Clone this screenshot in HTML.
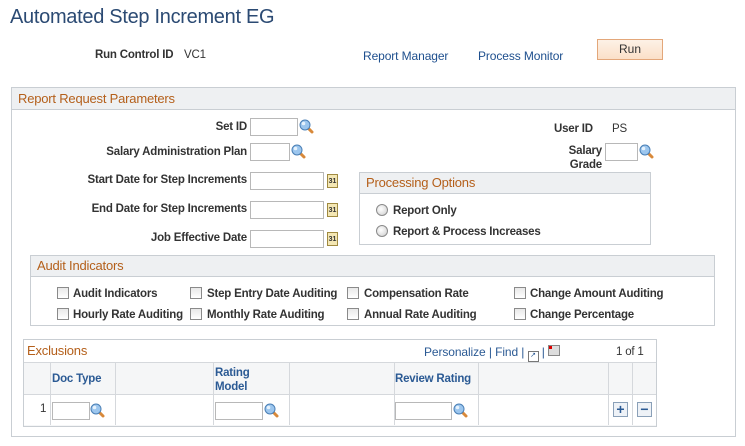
<!DOCTYPE html>
<html><head><style>
*{box-sizing:border-box}
body{margin:0;width:745px;height:446px;background:#fff;font-family:"Liberation Sans",Arial,sans-serif;position:relative;overflow:hidden}
.a{position:absolute;white-space:nowrap}
.lb{font-weight:bold;font-size:11.5px;color:#333;letter-spacing:-0.2px;margin-top:2px}
.tx{font-size:11.5px;color:#333;letter-spacing:-0.2px;margin-top:2px}
.lk{font-size:12px;color:#1e4f8e;letter-spacing:-0.1px}
.in{position:absolute;border:1px solid #b8b8b8;background:#fff;height:18px}
.box{position:absolute;border:1px solid #c9ced3}
.hd{position:absolute;left:0;right:0;top:0;background:#eef0f2;border-bottom:1px solid #c9ced3;color:#b45f1a;font-size:13px;padding-left:6px;letter-spacing:-0.2px}
.cb{position:absolute;width:12px;height:12px;border:1px solid #8a8a8a;background:linear-gradient(#e8e8e8,#fff);margin-top:1px}
.rd{position:absolute;width:12px;height:12px;border-radius:50%;border:1px solid #8a8a8a;background:radial-gradient(circle at 40% 40%,#fff,#ccc);margin-top:1px}
.cal{position:absolute;width:11px;height:14px;background:#f4e7b4;border:1px solid #a08a40;font-size:7px;font-weight:bold;color:#333;text-align:center;line-height:13px}
</style></head><body>
<svg width="0" height="0" style="position:absolute"><defs><g id="m"><line x1="8" y1="8" x2="13" y2="13" stroke="#d8893a" stroke-width="3" stroke-linecap="round"/><circle cx="6" cy="6" r="5" fill="#9cc6ee" stroke="#4a7fb5" stroke-width="1"/><circle cx="4.5" cy="4.5" r="1.8" fill="#e6f2fc"/></g></defs></svg>

<div class="a" style="left:10px;top:6px;font-size:20px;color:#2b4a73;letter-spacing:-0.3px">Automated Step Increment EG</div>
<div class="a lb" style="left:95px;top:47px">Run Control ID</div>
<div class="a tx" style="left:184px;top:47px">VC1</div>
<div class="a lk" style="left:363px;top:49px">Report Manager</div>
<div class="a lk" style="left:478px;top:49px">Process Monitor</div>
<div class="a" style="left:597px;top:39px;width:66px;height:21px;background:linear-gradient(#fdf1e6,#fbe0c8);border:1px solid #e3a77a;font-size:12px;color:#333;text-align:center;line-height:19px">Run</div>

<div class="box" style="left:11px;top:87px;width:725px;height:350px">
<div class="hd" style="height:22px;line-height:21px">Report Request Parameters</div>
</div>

<div class="a lb" style="left:0;width:247px;text-align:right;top:119px">Set ID</div>
<div class="in" style="left:250px;top:118px;width:48px"></div>
<svg class="a" style="left:299px;top:119px" width="16" height="16"><use href="#m"/></svg>
<div class="a lb" style="left:0;width:247px;text-align:right;top:144px">Salary Administration Plan</div>
<div class="in" style="left:250px;top:143px;width:40px"></div>
<svg class="a" style="left:291px;top:144px" width="16" height="16"><use href="#m"/></svg>
<div class="a lb" style="left:554px;top:121px">User ID</div>
<div class="a tx" style="left:612px;top:121px">PS</div>
<div class="a lb" style="left:560px;width:42px;text-align:right;top:142px;line-height:14px">Salary<br>Grade</div>
<div class="in" style="left:605px;top:143px;width:33px"></div>
<svg class="a" style="left:639px;top:144px" width="16" height="16"><use href="#m"/></svg>

<div class="a lb" style="left:0;width:247px;text-align:right;top:172px">Start Date for Step Increments</div>
<div class="in" style="left:250px;top:172px;width:74px"></div>
<div class="cal" style="left:327px;top:174px">31</div>
<div class="a lb" style="left:0;width:247px;text-align:right;top:201px">End Date for Step Increments</div>
<div class="in" style="left:250px;top:201px;width:74px"></div>
<div class="cal" style="left:327px;top:203px">31</div>
<div class="a lb" style="left:0;width:247px;text-align:right;top:230px">Job Effective Date</div>
<div class="in" style="left:250px;top:230px;width:74px"></div>
<div class="cal" style="left:327px;top:232px">31</div>

<div class="box" style="left:359px;top:172px;width:292px;height:73px">
<div class="hd" style="height:21px;line-height:20px">Processing Options</div>
</div>
<div class="rd" style="left:376px;top:203px"></div>
<div class="a lb" style="left:393px;top:203px">Report Only</div>
<div class="rd" style="left:376px;top:224px"></div>
<div class="a lb" style="left:393px;top:224px">Report &amp; Process Increases</div>

<div class="box" style="left:30px;top:255px;width:685px;height:71px">
<div class="hd" style="height:21px;line-height:20px">Audit Indicators</div>
</div>
<div class="cb" style="left:57px;top:286px"></div><div class="a lb" style="left:73px;top:286px">Audit Indicators</div>
<div class="cb" style="left:190px;top:286px"></div><div class="a lb" style="left:207px;top:286px">Step Entry Date Auditing</div>
<div class="cb" style="left:347px;top:286px"></div><div class="a lb" style="left:364px;top:286px">Compensation Rate</div>
<div class="cb" style="left:514px;top:286px"></div><div class="a lb" style="left:530px;top:286px">Change Amount Auditing</div>
<div class="cb" style="left:57px;top:307px"></div><div class="a lb" style="left:73px;top:307px">Hourly Rate Auditing</div>
<div class="cb" style="left:190px;top:307px"></div><div class="a lb" style="left:207px;top:307px">Monthly Rate Auditing</div>
<div class="cb" style="left:347px;top:307px"></div><div class="a lb" style="left:364px;top:307px">Annual Rate Auditing</div>
<div class="cb" style="left:514px;top:307px"></div><div class="a lb" style="left:530px;top:307px">Change Percentage</div>

<div class="box" style="left:23px;top:339px;width:634px;height:88px;border-color:#c9ced3">
<div class="a" style="left:0;top:0;width:632px;height:23px;background:#fff"></div>
</div>
<div class="a" style="left:27px;top:343px;font-size:13px;color:#b45f1a;letter-spacing:-0.2px">Exclusions</div>
<div class="a lk" style="left:424px;top:345px;color:#2b5a94">Personalize | Find | <span style="display:inline-block;width:11px;height:11px;border:1px solid #777;vertical-align:-1px;font-size:7px;line-height:8px;text-align:center">↗</span> | <span style="display:inline-block;width:12px;height:11px;border:1px solid #888;background:#ddd;vertical-align:0px;position:relative"><span style="position:absolute;left:0;top:0;width:3px;height:3px;background:#d00"></span></span></div>
<div class="a tx" style="left:616px;top:344px">1 of 1</div>
<div class="a" style="left:24px;top:362px;width:632px;height:64px;background:#f5f6f7;border-top:1px solid #d5d8dc"></div>
<div class="a" style="left:24px;top:394px;width:632px;height:31px;background:#fff;border-top:1px solid #d5d8dc"></div>
<div class="a" style="left:50px;top:362px;width:1px;height:63px;background:#d5d8dc"></div>
<div class="a" style="left:115px;top:362px;width:1px;height:63px;background:#d5d8dc"></div>
<div class="a" style="left:213px;top:362px;width:1px;height:63px;background:#d5d8dc"></div>
<div class="a" style="left:289px;top:362px;width:1px;height:63px;background:#d5d8dc"></div>
<div class="a" style="left:394px;top:362px;width:1px;height:63px;background:#d5d8dc"></div>
<div class="a" style="left:478px;top:362px;width:1px;height:63px;background:#d5d8dc"></div>
<div class="a" style="left:608px;top:362px;width:1px;height:63px;background:#d5d8dc"></div>
<div class="a" style="left:632px;top:362px;width:1px;height:63px;background:#d5d8dc"></div>
<div class="a lb" style="left:52px;top:371px;color:#2b5a94">Doc Type</div>
<div class="a lb" style="left:215px;top:364px;color:#2b5a94;line-height:14px">Rating<br>Model</div>
<div class="a lb" style="left:395px;top:371px;color:#2b5a94">Review Rating</div>
<div class="a tx" style="left:40px;top:401px">1</div>
<div class="in" style="left:52px;top:402px;width:38px"></div>
<svg class="a" style="left:90px;top:403px" width="16" height="16"><use href="#m"/></svg>
<div class="in" style="left:215px;top:402px;width:48px"></div>
<svg class="a" style="left:264px;top:403px" width="16" height="16"><use href="#m"/></svg>
<div class="in" style="left:395px;top:402px;width:57px"></div>
<svg class="a" style="left:453px;top:403px" width="16" height="16"><use href="#m"/></svg>
<div class="a" style="left:613px;top:402px;width:15px;height:15px;border:1px solid #8aa0b8;background:#eef2f7;color:#2b5a94;font-weight:bold;font-size:14px;line-height:12px;text-align:center">+</div>
<div class="a" style="left:637px;top:402px;width:15px;height:15px;border:1px solid #8aa0b8;background:#eef2f7;color:#2b5a94;font-weight:bold;font-size:14px;line-height:12px;text-align:center">−</div>
</body></html>
